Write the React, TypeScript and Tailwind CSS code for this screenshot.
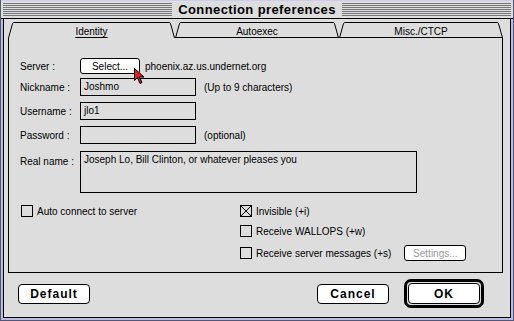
import React from "react";

const sans = { fontFamily: '"Liberation Sans", Arial, sans-serif' };

function Stripes() {
  return (
    <div className="flex-1 h-[13px] flex flex-col justify-between">
      {Array.from({ length: 7 }).map((_, i) => (
        <div key={i} className="h-px bg-[#777777]" />
      ))}
    </div>
  );
}

function Tab({ label, active, underline, w }: { label: string; active?: boolean; underline?: boolean; w: number }) {
  return (
    <div className="relative h-[16px] flex items-center justify-center pt-[3px]" style={{ width: w }}>
      <svg className="absolute inset-0" width={w} height={16} viewBox={`0 0 ${w} 16`}>
        <path
          d={`M0.5 16 L4.5 1.5 Q5 0.5 6 0.5 L${w - 6} 0.5 Q${w - 5} 0.5 ${w - 4.5} 1.5 L${w - 0.5} 16`}
          fill="#dddddd"
          stroke="#000"
          strokeWidth="1"
        />
        {!active && <line x1="0" y1="15.5" x2={w} y2="15.5" stroke="#000" />}
      </svg>
      <span className={`relative text-[10px] text-black ${underline ? "underline underline-offset-2" : ""}`} style={sans}>
        {label}
      </span>
    </div>
  );
}

function Field({ w, h, children }: { w: number; h: number; children?: React.ReactNode }) {
  return (
    <div className="border border-black bg-[#dddddd] px-[3px] text-[10px] text-black leading-[16px]" style={{ width: w, height: h, ...sans }}>
      {children}
    </div>
  );
}

function Check({ checked, label }: { checked?: boolean; label: string }) {
  return (
    <div className="flex items-center gap-[4px] h-[12px]">
      <div className="w-[12px] h-[12px] border border-black bg-[#dddddd] relative">
        {checked && (
          <svg className="absolute inset-0" width="10" height="10" viewBox="0 0 10 10">
            <line x1="0" y1="0" x2="10" y2="10" stroke="#000" strokeWidth="1" />
            <line x1="10" y1="0" x2="0" y2="10" stroke="#000" strokeWidth="1" />
          </svg>
        )}
      </div>
      <span className="text-[10px] text-black" style={sans}>{label}</span>
    </div>
  );
}

function BigButton({ label, w }: { label: string; w: number }) {
  return (
    <div
      className="h-[20px] border border-black rounded-[4px] bg-white flex items-center justify-center text-[12px] font-bold tracking-[1px] text-black"
      style={{ width: w, ...sans }}
    >
      {label}
    </div>
  );
}

export default function App() {
  return (
    <div className="w-[514px] h-[321px] bg-[#dddddd] flex flex-col border-l border-r border-b border-[#555577] overflow-hidden">
      {/* Title bar */}
      <div className="h-[19px] flex items-center px-[2px] gap-[6px] border-b border-black bg-[#dddddd] border-t border-t-[#ccccee]">
        <Stripes />
        <div className="text-[13px] font-bold tracking-[0.4px] text-black leading-none" style={sans}>
          Connection preferences
        </div>
        <Stripes />
      </div>
      {/* Window body */}
      <div className="flex-1 flex border-l-[2px] border-l-[#bbbbdd] border-r-[2px] border-r-[#bbbbdd] border-b-[2px] border-b-[#bbbbdd]">
        <div className="flex-1 border-l border-r border-b border-black bg-[#dddddd] flex flex-col px-[4px] pt-[3px]">
          {/* Tabs */}
          <div className="flex h-[16px] ml-[0px]">
            <Tab label="Identity" active underline w={167} />
            <Tab label="Autoexec" w={164} />
            <Tab label="Misc./CTCP" w={164} />
          </div>
          {/* Panel */}
          <div className="w-[495px] h-[235px] border-l border-r border-b border-black relative flex flex-col pl-[11px] pt-[20px]">
            <div className="flex items-center h-[16px]">
              <span className="w-[60px] text-[10px]" style={sans}>Server :</span>
              <div className="relative">
                <div className="w-[60px] h-[16px] border border-black rounded-[3px] bg-white flex items-center justify-center text-[10px]" style={sans}>
                  Select...
                </div>
                <svg className="absolute left-[54px] top-[10px]" width="11" height="17" viewBox="0 0 11 17">
                  <path d="M0.5 0.5 L0.5 12.5 L3.5 9.5 L6 15.5 L8 14.5 L5.5 9 L10 9 Z" fill="#e02020" stroke="#000" strokeWidth="1" />
                </svg>
              </div>
              <span className="ml-[5px] text-[10px]" style={sans}>phoenix.az.us.undernet.org</span>
            </div>
            <div className="flex items-center mt-[4px]">
              <span className="w-[60px] text-[10px]" style={sans}>Nickname :</span>
              <Field w={116} h={18}>Joshmo</Field>
              <span className="ml-[8px] text-[10px]" style={sans}>(Up to 9 characters)</span>
            </div>
            <div className="flex items-center mt-[6px]">
              <span className="w-[60px] text-[10px]" style={sans}>Username :</span>
              <Field w={116} h={18}>jlo1</Field>
            </div>
            <div className="flex items-center mt-[6px]">
              <span className="w-[60px] text-[10px]" style={sans}>Password :</span>
              <Field w={116} h={18} />
              <span className="ml-[8px] text-[10px]" style={sans}>(optional)</span>
            </div>
            <div className="flex items-start mt-[7px]">
              <span className="w-[60px] text-[10px] pt-[3px]" style={sans}>Real name :</span>
              <Field w={337} h={42}>Joseph Lo, Bill Clinton, or whatever pleases you</Field>
            </div>
            <div className="flex mt-[12px]">
              <div className="w-[220px] pl-[1px]">
                <Check label="Auto connect to server" />
              </div>
              <div className="flex flex-col gap-[8px]">
                <Check checked label="Invisible (+i)" />
                <Check label="Receive WALLOPS (+w)" />
                <div className="flex items-center">
                  <Check label="Receive server messages (+s)" />
                  <div className="ml-[13px] w-[62px] h-[16px] border border-black rounded-[3px] bg-white flex items-center justify-center text-[10px] text-[#999999]" style={sans}>
                    Settings...
                  </div>
                </div>
              </div>
            </div>
          </div>
          {/* Buttons */}
          <div className="flex items-center mt-[6px] pl-[10px] h-[29px]">
            <BigButton label="Default" w={72} />
            <div className="flex-1" />
            <BigButton label="Cancel" w={72} />
            <div className="ml-[15px] mr-[22px] w-[80px] h-[29px] border-[3px] border-black rounded-[7px] p-[1px] flex">
              <div className="flex-1 border border-black rounded-[4px] bg-white flex items-center justify-center text-[12px] font-bold tracking-[1px]" style={sans}>
                OK
              </div>
            </div>
          </div>
        </div>
      </div>
    </div>
  );
}
